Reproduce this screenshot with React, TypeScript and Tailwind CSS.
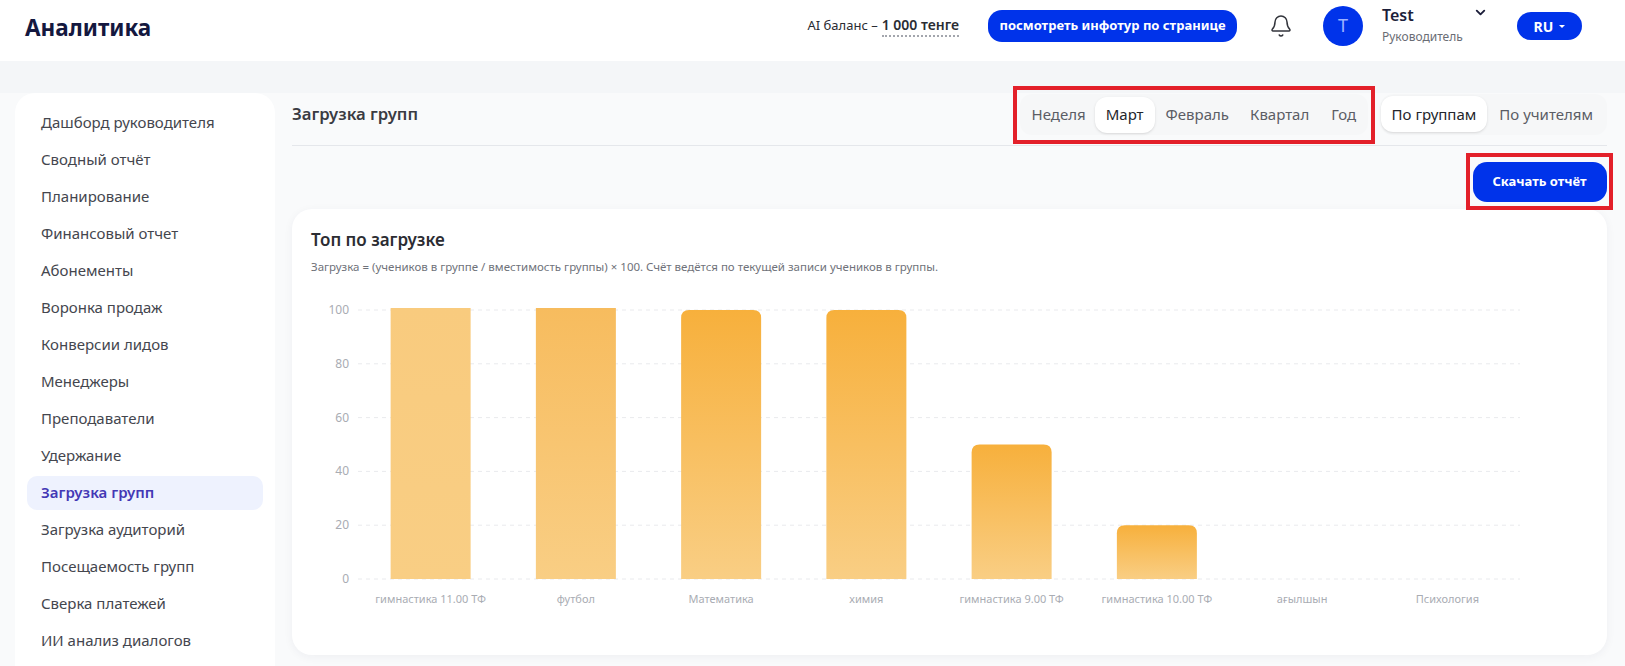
import React from 'react';
import { ChevronDown, Bell } from 'lucide-react';

const menu = [
  'Дашборд руководителя',
  'Сводный отчёт',
  'Планирование',
  'Финансовый отчет',
  'Абонементы',
  'Воронка продаж',
  'Конверсии лидов',
  'Менеджеры',
  'Преподаватели',
  'Удержание',
  'Загрузка групп',
  'Загрузка аудиторий',
  'Посещаемость групп',
  'Сверка платежей',
  'ИИ анализ диалогов',
];

const bars = [
  { label: 'гимнастика 11.00 ТФ', value: 100, over: true, from: '#f9cb7e' },
  { label: 'футбол', value: 100, over: true, from: '#f7bc5e' },
  { label: 'Математика', value: 100, from: '#f7b03c' },
  { label: 'химия', value: 100, from: '#f7b03c' },
  { label: 'гимнастика 9.00 ТФ', value: 50, from: '#f7b03c' },
  { label: 'гимнастика 10.00 ТФ', value: 20, from: '#f7b03c' },
  { label: 'ағылшын', value: 0, from: '#f7b03c' },
  { label: 'Психология', value: 0, from: '#f7b03c' },
];

const Chart = () => {
  const left = 47;
  const right = 1209;
  const bottom = 281;
  const unit = 2.69;
  const step = (right - left) / 8;
  return (
    <svg width="1262" height="322" className="block" style={{ fontFamily: '"Noto Sans", sans-serif' }}>
      <defs>
        {bars.map((b, i) => (
          <linearGradient key={i} id={`bar${i}`} x1="0" y1="0" x2="0" y2="1">
            <stop offset="0%" stopColor={b.from} />
            <stop offset="100%" stopColor="#f9ce84" />
          </linearGradient>
        ))}
      </defs>
      {[0, 20, 40, 60, 80, 100].map((t) => (
        <g key={t}>
          <line x1={left} x2={right} y1={bottom - t * unit} y2={bottom - t * unit} stroke="#e9eaed" strokeDasharray="4 4" />
          <text x={left - 9} y={bottom - t * unit + 4} textAnchor="end" fontSize="12" fill="#a9acb3">{t}</text>
        </g>
      ))}
      {bars.map((b, i) => {
        const x = left + step * i + step / 2 - 40;
        const h = b.value * unit;
        if (!h) return null;
        if (b.over) return <rect key={i} x={x} y={bottom - h - 2} width="80" height={h + 2} fill={`url(#bar${i})`} />;
        return (
          <path
            key={i}
            d={`M${x} ${bottom} V${bottom - h + 8} Q${x} ${bottom - h} ${x + 8} ${bottom - h} H${x + 72} Q${x + 80} ${bottom - h} ${x + 80} ${bottom - h + 8} V${bottom} Z`}
            fill={`url(#bar${i})`}
          />
        );
      })}
      {bars.map((b, i) => (
        <text key={i} x={left + step * i + step / 2} y={305} textAnchor="middle" fontSize="11" fill="#a9acb3">{b.label}</text>
      ))}
    </svg>
  );
};

export default function App() {
  return (
    <div className="h-[666px] overflow-hidden bg-[#f9fafb] font-['Noto_Sans',sans-serif] text-[#3b3d45]">
      <header className="h-[61px] bg-white flex items-center pl-[25px] pr-[43px]">
        <h1 className="text-[22.5px] font-bold text-[#14183f] leading-none mb-[5px]">Аналитика</h1>
        <div className="ml-auto flex items-center">
          <div className="text-[13px] text-[#2a2c33] flex items-center gap-1 mb-[10px] mr-[29px]">
            <span>AI баланс –</span>
            <span className="font-semibold border-b-2 border-dotted border-[#a3a6ad] leading-[20px] text-[14px]">1 000 тенге</span>
          </div>
          <button className="h-8 w-[249px] rounded-[14px] bg-[#0033ea] text-white text-[13px] font-bold mb-[9px] mr-[32px]">
            посмотреть инфотур по странице
          </button>
          <Bell size={24} strokeWidth={1.5} className="text-[#33353c] mb-[9px] mr-[30px]" />
          <div className="w-10 h-10 rounded-full bg-[#0033ea] text-[#9db2ff] flex items-center justify-center text-[18px] mr-[19px] mb-[10px]">T</div>
          <div className="w-[99px] relative mb-[11px]">
            <div className="text-[16px] font-semibold text-[#1c1e3a] leading-[22px]">Test</div>
            <div className="text-[12px] text-[#6a6d75] leading-[18px] mt-[2px]">Руководитель</div>
            <ChevronDown size={15} strokeWidth={3} className="absolute right-[-7px] top-[1px] text-[#1c1e3a]" />
          </div>
          <div className="w-[65px] h-7 ml-[36px] mb-[9px] rounded-full bg-[#0033ea] text-white text-[14px] font-bold flex items-center justify-center gap-[6px]">
            RU
            <span className="w-0 h-0 border-x-[3px] border-x-transparent border-t-[3px] border-t-white" />
          </div>
        </div>
      </header>
      <div className="h-8 bg-[#f4f6f8]" />
      <div className="flex pl-[15px] pr-[18px] gap-[17px]">
        <aside className="w-[260px] shrink-0 h-[600px] bg-white rounded-t-[20px] px-3 pt-[11px]">
          {menu.map((m) =>
            m === 'Загрузка групп' ? (
              <div key={m} className="h-[34px] my-[1.5px] flex items-center px-[14px] rounded-[10px] bg-[#eef2fe] text-[#4338b5] text-[15px] font-semibold">{m}</div>
            ) : (
              <div key={m} className="h-[37px] flex items-center px-[14px] text-[15px] text-[#44464e]">{m}</div>
            )
          )}
        </aside>
        <main className="flex-1 min-w-0">
          <div className="h-[53px] flex items-center justify-between border-b border-[#e5e7eb]">
            <h2 className="text-[16.7px] font-semibold text-[#3a3b42] mb-[11px]">Загрузка групп</h2>
            <div className="flex items-center mb-[10px]">
              <div className="border-4 border-[#e3202a] h-[58px] w-[362px] px-[3px] flex items-center mt-[1px] mr-[6px]">
                <div className="flex items-center h-[41px] w-full rounded-xl bg-[#f6f7f8] px-[4px] text-[15px] text-[#5b5d65]">
                  <span className="px-[8px]">Неделя</span>
                  <span className="px-[11px] h-[36px] flex items-center ml-[1px] rounded-[12px] bg-white text-[#24262c] shadow-sm">Март</span>
                  <span className="pl-[11px]">Февраль</span>
                  <span className="pl-[21px]">Квартал</span>
                  <span className="pl-[22px]">Год</span>
                </div>
              </div>
              <div className="flex items-center h-[41px] rounded-xl bg-[#f6f7f8] text-[15px] text-[#5b5d65] pr-[14px]">
                <span className="px-[11px] h-[36px] flex items-center rounded-[12px] bg-white text-[#24262c] shadow-sm">По группам</span>
                <span className="pl-[12px]">По учителям</span>
              </div>
            </div>
          </div>
          <div className="flex justify-end -mr-[6px] mt-[7px] -mb-px relative z-10">
            <div className="border-4 border-[#e3202a] w-[147px] h-[57px] flex items-center justify-center">
              <button className="w-[134px] h-10 rounded-[14px] bg-[#0033ea] text-white text-[13px] font-bold">Скачать отчёт</button>
            </div>
          </div>
          <section className="h-[446px] w-[1315px] bg-white rounded-[20px] shadow-[0_2px_10px_rgba(30,40,70,0.05)] pt-[19px] pl-[19px]">
            <h3 className="text-[17px] font-semibold text-[#2c2d33] leading-6">Топ по загрузке</h3>
            <p className="text-[11.5px] text-[#6f727a] mt-[7px] leading-4">Загрузка = (учеников в группе / вместимость группы) × 100. Счёт ведётся по текущей записи учеников в группы.</p>
            <div className="mt-[23px]">
              <Chart />
            </div>
          </section>
        </main>
      </div>
    </div>
  );
}
